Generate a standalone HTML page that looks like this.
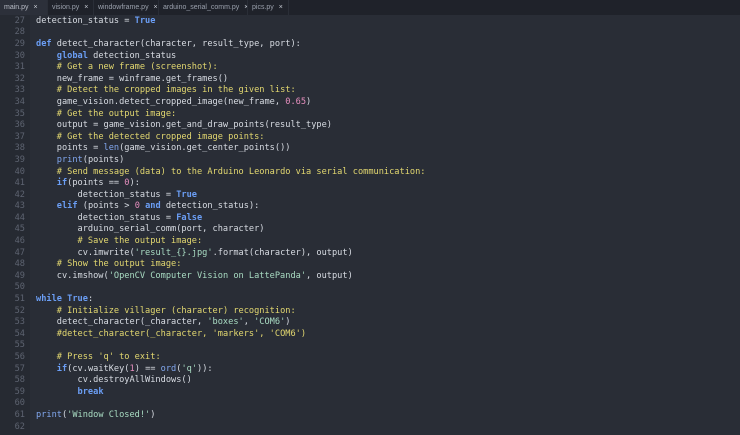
<!DOCTYPE html><html><head><style>
body{margin:0;width:740px;height:435px;background:#292d36;overflow:hidden;font-family:"DejaVu Sans Mono",monospace}
.tabs{height:15px;background:#1f222a;display:flex;font-family:"Liberation Sans",sans-serif;font-size:7px;color:#9aa0ac}
.tab{line-height:15px;border-right:1px solid #2a2e37;box-sizing:border-box;padding-left:4px;white-space:nowrap;overflow:hidden}
.tab.a{background:#2c303a;color:#b8bcc6}
.tab b{font-weight:normal;color:#c8ccd4;margin-left:3px}
.g{position:absolute;left:0;top:15px;width:30px;height:420px;background:#262a32}
pre{position:absolute;margin:0;top:15.8px;left:0;font-size:8.65px;line-height:11.6px;color:#d8dce3}
.n{display:inline-block;width:25px;text-align:right;color:#5d6370;margin-right:11px}
.k{color:#6b9ef5;font-weight:bold}.c{color:#e3d870}.s{color:#a9dcc3}.m{color:#e78fbf}.f{color:#82a8f0}
</style></head><body>
<div class="tabs"><div class="tab a" style="width:48px">main.py <b>×</b></div><div class="tab" style="width:46px">vision.py <b>×</b></div><div class="tab" style="width:65px">windowframe.py <b>×</b></div><div class="tab" style="width:89px">arduino_serial_comm.py <b>×</b></div><div class="tab" style="width:41px">pics.py <b>×</b></div></div>
<div class="g"></div>
<pre><span class="n">27</span>detection_status = <span class="k">True</span>
<span class="n">28</span>
<span class="n">29</span><span class="k">def</span> detect_character(character, result_type, port):
<span class="n">30</span>    <span class="k">global</span> detection_status
<span class="n">31</span>    <span class="c"># Get a new frame (screenshot):</span>
<span class="n">32</span>    new_frame = winframe.get_frames()
<span class="n">33</span>    <span class="c"># Detect the cropped images in the given list:</span>
<span class="n">34</span>    game_vision.detect_cropped_image(new_frame, <span class="m">0.65</span>)
<span class="n">35</span>    <span class="c"># Get the output image:</span>
<span class="n">36</span>    output = game_vision.get_and_draw_points(result_type)
<span class="n">37</span>    <span class="c"># Get the detected cropped image points:</span>
<span class="n">38</span>    points = <span class="f">len</span>(game_vision.get_center_points())
<span class="n">39</span>    <span class="f">print</span>(points)
<span class="n">40</span>    <span class="c"># Send message (data) to the Arduino Leonardo via serial communication:</span>
<span class="n">41</span>    <span class="k">if</span>(points == <span class="m">0</span>):
<span class="n">42</span>        detection_status = <span class="k">True</span>
<span class="n">43</span>    <span class="k">elif</span> (points &gt; <span class="m">0</span> <span class="k">and</span> detection_status):
<span class="n">44</span>        detection_status = <span class="k">False</span>
<span class="n">45</span>        arduino_serial_comm(port, character)
<span class="n">46</span>        <span class="c"># Save the output image:</span>
<span class="n">47</span>        cv.imwrite(<span class="s">'result_{}.jpg'</span>.format(character), output)
<span class="n">48</span>    <span class="c"># Show the output image:</span>
<span class="n">49</span>    cv.imshow(<span class="s">'OpenCV Computer Vision on LattePanda'</span>, output)
<span class="n">50</span>
<span class="n">51</span><span class="k">while</span> <span class="k">True</span>:
<span class="n">52</span>    <span class="c"># Initialize villager (character) recognition:</span>
<span class="n">53</span>    detect_character(_character, <span class="s">'boxes'</span>, <span class="s">'COM6'</span>)
<span class="n">54</span>    <span class="c">#detect_character(_character, 'markers', 'COM6')</span>
<span class="n">55</span>
<span class="n">56</span>    <span class="c"># Press 'q' to exit:</span>
<span class="n">57</span>    <span class="k">if</span>(cv.waitKey(<span class="m">1</span>) == <span class="f">ord</span>(<span class="s">'q'</span>)):
<span class="n">58</span>        cv.destroyAllWindows()
<span class="n">59</span>        <span class="k">break</span>
<span class="n">60</span>
<span class="n">61</span><span class="f">print</span>(<span class="s">'Window Closed!'</span>)
<span class="n">62</span></pre>
</body></html>
